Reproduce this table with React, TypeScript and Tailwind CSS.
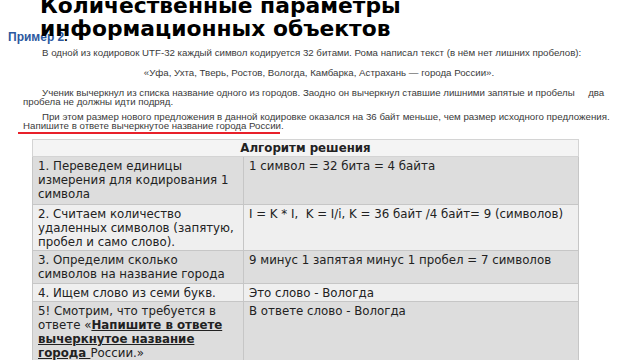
import React from 'react';

const rows = [
  {
    left: ['1. Переведем единицы', 'измерения для кодирования 1', 'символа'],
    right: '1 символ = 32 бита = 4 байта',
    h: 'h-[48px]',
    bg: 'bg-[#dddddd]',
  },
  {
    left: ['2. Считаем количество', 'удаленных символов (запятую,', 'пробел и само слово).'],
    right: 'I = K * I,\u00a0 K = I/i, K = 36 байт /4 байт= 9 (символов)',
    h: 'h-[46px]',
    bg: 'bg-[#efefef]',
  },
  {
    left: ['3. Определим сколько', 'символов на название города'],
    right: '9 минус 1 запятая минус 1 пробел = 7 символов',
    h: 'h-[33px]',
    bg: 'bg-[#dddddd]',
  },
  {
    left: ['4. Ищем слово из семи букв.'],
    right: 'Это слово - Вологда',
    h: 'h-[18px]',
    bg: 'bg-[#efefef]',
  },
];

export default function App() {
  return (
    <div className="relative w-[640px] h-[360px] overflow-hidden bg-white">
      {/* заголовок слайда, лежит поверх скана */}
      <h1 className="absolute left-[40px] top-[-6px] z-10 font-['DejaVu_Sans',sans-serif] text-[21.8px] font-bold leading-[23px] text-black whitespace-nowrap">
        Количественные параметры
        <br />
        информационных объектов
      </h1>

      <div className="pt-[31px] pl-[8px] font-['Liberation_Sans',sans-serif] text-[12px] font-bold leading-[12px]">
        <span className="text-[#2c58a0]">Пример 2</span>
        <span className="text-black">.</span>
      </div>

      {/* условие задачи */}
      <div className="w-[600px] ml-[23px] font-['Liberation_Sans',sans-serif] text-[9.7px] leading-[10px] text-[#3a3a3a] whitespace-nowrap">
        <p className="mt-[5px] pl-[19px]">
          В одной из кодировок UTF-32 каждый символ кодируется 32 битами. Рома написал текст (в нём нет лишних пробелов):
        </p>
        <p className="mt-[10px] pr-[8px] text-center">
          «Уфа, Ухта, Тверь, Ростов, Вологда, Камбарка, Астрахань — города России».
        </p>
        <p className="mt-[10px] pl-[19px]">
          Ученик вычеркнул из списка название одного из городов. Заодно он вычеркнул ставшие лишними запятые и пробелы &nbsp;&nbsp;&nbsp;&nbsp;два
        </p>
        <p className="mt-[-1px]">пробела не должны идти подряд.</p>
        <p className="mt-[5px] pl-[19px]">
          При этом размер нового предложения в данной кодировке оказался на 36 байт меньше, чем размер исходного предложения.
        </p>
        <p className="mt-[-1px]">Напишите в ответе вычеркнутое название города России.</p>
        <div className="mt-[1px] ml-[-5px] w-[262px] h-[2px] bg-[#e8202a]" />
      </div>

      {/* таблица с решением */}
      <table className="mt-[5px] ml-[32px] w-[547px] table-fixed border-collapse font-['DejaVu_Sans',sans-serif] text-[11.8px] leading-[14px] text-[#222]">
        <colgroup>
          <col className="w-[211px]" />
          <col />
        </colgroup>
        <thead>
          <tr className="h-[17px] bg-[#f4f4f4]">
            <th colSpan={2} className="border border-[#d4d4d4] py-0 text-center font-bold">
              Алгоритм решения
            </th>
          </tr>
        </thead>
        <tbody>
          {rows.map((r) => (
            <tr key={r.right} className={`${r.h} ${r.bg}`}>
              <td className="border-[1.5px] border-[#c6c6c6] pl-[5px] pr-0 pt-[2px] align-top whitespace-nowrap overflow-hidden">
                {r.left.map((line, i) => (
                  <div key={i}>{line}</div>
                ))}
              </td>
              <td className="border-[1.5px] border-[#c6c6c6] px-[5px] pt-[2px] align-top">{r.right}</td>
            </tr>
          ))}
          <tr className="h-[62px] bg-[#dddddd]">
            <td className="border-[1.5px] border-[#c6c6c6] pl-[5px] pr-0 pt-[2px] align-top whitespace-nowrap">
              <div>5! Смотрим, что требуется в</div>
              <div>
                ответе «<b className="underline">Напишите в ответе</b>
              </div>
              <div>
                <b className="underline">вычеркнутое название</b>
              </div>
              <div>
                <b className="underline">города </b>России.»
              </div>
            </td>
            <td className="border-[1.5px] border-[#c6c6c6] px-[5px] pt-[2px] align-top">
              В ответе слово - Вологда
            </td>
          </tr>
        </tbody>
      </table>
    </div>
  );
}
